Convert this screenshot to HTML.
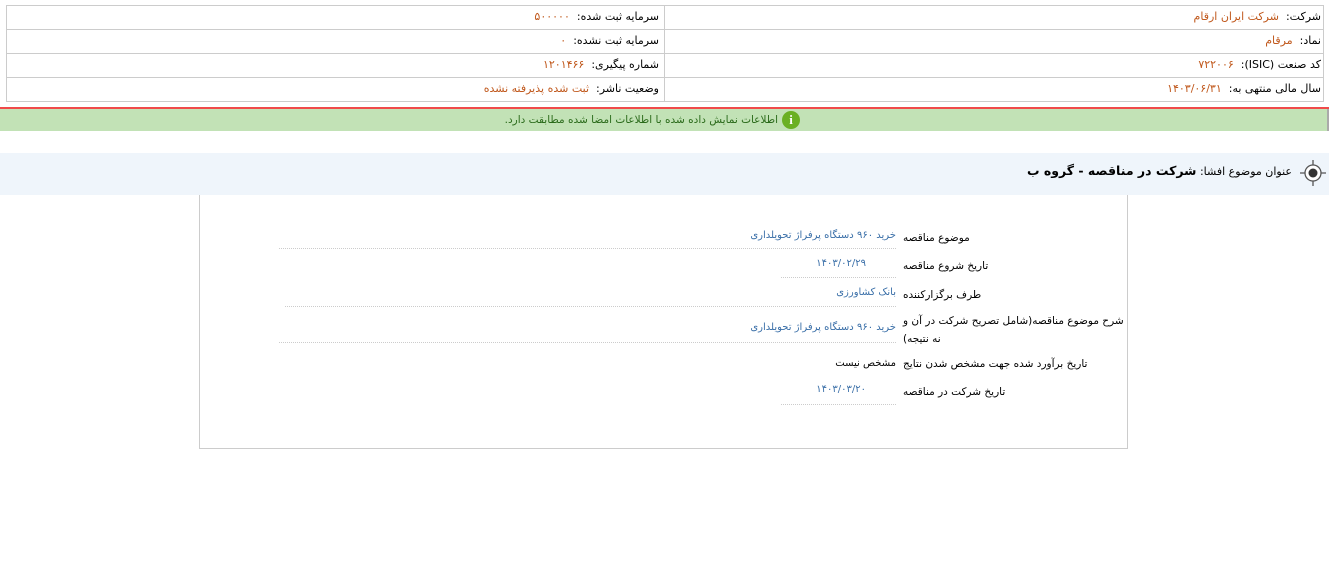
<!DOCTYPE html>
<html><head><meta charset="utf-8"><style>
body{margin:0;width:1329px;height:571px;background:#fff;font-family:"DejaVu Sans","Liberation Sans",sans-serif;font-size:11px;position:relative;overflow:hidden}
.a{position:absolute;white-space:nowrap;direction:rtl}
.c{position:absolute;border:1px solid #ccc;box-sizing:border-box}
.o{color:#c0581c}
.b{color:#3a6fa8}
.l{font-size:10.5px;color:#000;left:903px}
.v{font-size:10px}
.d{position:absolute;border-bottom:1px dotted #ccc}
</style></head><body>
<div class="c" style="left:6px;top:5px;width:1318px;height:97px"></div>
<div style="position:absolute;left:6px;width:1318px;top:29px;border-top:1px solid #ccc"></div>
<div style="position:absolute;left:6px;width:1318px;top:53px;border-top:1px solid #ccc"></div>
<div style="position:absolute;left:6px;width:1318px;top:77px;border-top:1px solid #ccc"></div>
<div style="position:absolute;left:664px;top:5px;height:97px;border-left:1px solid #ccc"></div>
<div class="a" style="right:8px;top:10px">شرکت: <span class="o">&nbsp;شرکت ایران ارقام</span></div>
<div class="a" style="right:8px;top:34px">نماد: <span class="o">&nbsp;مرقام</span></div>
<div class="a" style="right:8px;top:58px">کد صنعت (ISIC): <span class="o">&nbsp;۷۲۲۰۰۶</span></div>
<div class="a" style="right:8px;top:82px">سال مالی منتهی به: <span class="o">&nbsp;۱۴۰۳/۰۶/۳۱</span></div>
<div class="a" style="right:670px;top:10px">سرمایه ثبت شده: <span class="o">&nbsp;۵۰۰۰۰۰</span></div>
<div class="a" style="right:670px;top:34px">سرمایه ثبت نشده: <span class="o">&nbsp;۰</span></div>
<div class="a" style="right:670px;top:58px">شماره پیگیری: <span class="o">&nbsp;۱۲۰۱۴۶۶</span></div>
<div class="a" style="right:670px;top:82px">وضعیت ناشر: <span class="o">&nbsp;ثبت شده پذیرفته نشده</span></div>
<div style="position:absolute;left:0;width:1329px;top:107px;height:2px;background:#f04a4a"></div>
<div style="position:absolute;left:0;width:1327px;top:109px;height:22px;background:#c2e2b6;border-right:2px solid #aaa"></div>
<div class="a" style="right:551px;top:114px;color:#2a6a1a;font-size:10.5px">اطلاعات نمایش داده شده با اطلاعات امضا شده مطابقت دارد.</div>
<div style="position:absolute;left:782px;top:111px;width:18px;height:18px;border-radius:50%;background:#6ab023;color:#fff;font-weight:bold;text-align:center;line-height:18px;font-size:13px;font-family:'Liberation Serif',serif">i</div>
<div style="position:absolute;left:0;width:1329px;top:153px;height:42px;background:#eff5fb"></div>
<svg style="position:absolute;left:1298px;top:158px" width="30" height="30" viewBox="0 0 30 30"><circle cx="15" cy="15" r="8" fill="#fff" stroke="#555" stroke-width="1.3"/><circle cx="15" cy="15" r="4.5" fill="#333"/><path d="M15 2v5M15 23v5M2 15h5M23 15h5" stroke="#555" stroke-width="1.3"/></svg>
<div class="a" style="right:37px;top:163px;font-size:11px">عنوان موضوع افشا: <b style="font-size:12.5px">شرکت در مناقصه - گروه ب</b></div>
<div class="c" style="left:199px;top:195px;width:929px;height:254px;border-top:none"></div>
<div class="a l" style="top:232px">موضوع مناقصه</div>
<div class="a b v" style="right:433px;top:230px">خرید ۹۶۰ دستگاه پرفراژ تحویلداری</div>
<div class="d" style="left:279px;width:617px;top:248px"></div>
<div class="a l" style="top:260px">تاریخ شروع مناقصه</div>
<div class="a b v" style="right:463px;top:258px">۱۴۰۳/۰۲/۲۹</div>
<div class="d" style="left:781px;width:115px;top:277px"></div>
<div class="a l" style="top:289px">طرف برگزارکننده</div>
<div class="a b v" style="right:433px;top:287px">بانک کشاورزی</div>
<div class="d" style="left:285px;width:611px;top:306px"></div>
<div class="a l" style="top:315px">شرح موضوع مناقصه(شامل تصریح شرکت در آن و</div>
<div class="a l" style="top:333px">نه نتیجه)</div>
<div class="a b v" style="right:433px;top:322px">خرید ۹۶۰ دستگاه پرفراژ تحویلداری</div>
<div class="d" style="left:279px;width:617px;top:342px"></div>
<div class="a l" style="top:358px">تاریخ برآورد شده جهت مشخص شدن نتایج</div>
<div class="a v" style="right:433px;top:358px">مشخص نیست</div>
<div class="a l" style="top:386px">تاریخ شرکت در مناقصه</div>
<div class="a b v" style="right:463px;top:384px">۱۴۰۳/۰۳/۲۰</div>
<div class="d" style="left:781px;width:115px;top:404px"></div>
</body></html>
